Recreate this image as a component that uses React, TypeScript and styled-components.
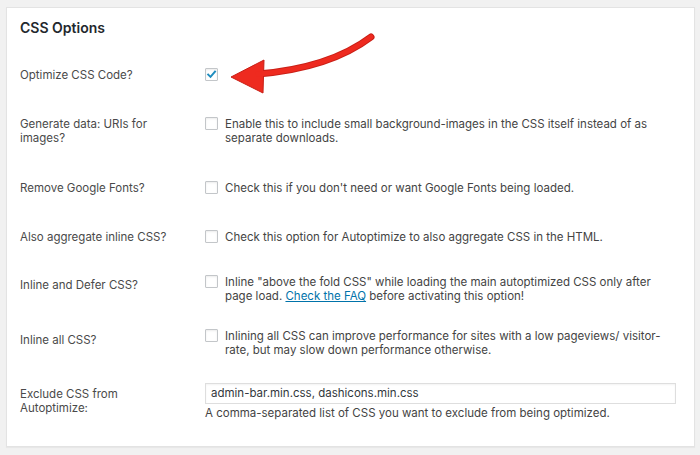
import React from "react";
import styled, { createGlobalStyle } from "styled-components";

const GlobalStyle = createGlobalStyle`
  html, body { margin: 0; padding: 0; background: #f1f1f1; }
  body {
    font-family: Inter, "Liberation Sans", Arial, sans-serif;
    -webkit-font-smoothing: antialiased;
  }
`;

const Page = styled.div`
  position: relative;
  width: 700px;
  height: 455px;
  box-sizing: border-box;
  padding: 7px 5px 8px 6px;
`;

const Card = styled.section`
  box-sizing: border-box;
  height: 100%;
  background: #fff;
  border: 1px solid #e3e3e3;
  box-shadow: 0 1px 1px rgba(0, 0, 0, 0.04);
  padding: 12px 14px 0 13px;
`;

const Title = styled.h2`
  margin: 0;
  font-size: 14px;
  line-height: 16px;
  font-weight: 600;
  color: #23282d;
`;

const Row = styled.div<{ $gap: number }>`
  display: grid;
  grid-template-columns: 185px 1fr;
  margin-top: ${(p) => p.$gap}px;
  font-size: 11.5px;
  line-height: 14.5px;
  color: #444;
`;

const Label = styled.div<{ $shift?: number }>`
  padding-top: ${(p) => p.$shift ?? 0}px;
  padding-right: 30px;
  color: #4a4a4a;
`;

const Field = styled.div`
  display: flex;
  align-items: flex-start;
  gap: 7px;
`;

const Box = styled.span`
  flex: none;
  box-sizing: border-box;
  width: 13px;
  height: 13px;
  border: 1px solid #c3c6c9;
  border-radius: 1px;
  background: #fff;
  box-shadow: inset 0 1px 2px rgba(0, 0, 0, 0.08);
  display: flex;
  align-items: center;
  justify-content: center;
`;

const Desc = styled.span`
  max-width: 455px;
`;

const Link = styled.a`
  color: #0073aa;
  text-decoration: underline;
`;

const Control = styled.div`
  display: flex;
  flex-direction: column;
`;

const TextInput = styled.div`
  box-sizing: border-box;
  width: 471px;
  height: 21px;
  border: 1px solid #dedede;
  box-shadow: inset 0 1px 2px rgba(0, 0, 0, 0.05);
  padding: 0 5px;
  display: flex;
  align-items: center;
  color: #32373c;
  font-size: 11.5px;
`;

const Help = styled.p`
  margin: 2px 0 0;
`;

const Overlay = styled.svg`
  position: absolute;
  left: 0;
  top: 0;
  pointer-events: none;
`;

const Checkbox = ({ checked }: { checked?: boolean }) => (
  <Box>
    {checked && (
      <svg width="11" height="11" viewBox="0 0 11 11">
        <path d="M2.2 5.6 L4.5 7.9 L9 2.6" fill="none" stroke="#1e8cbe" strokeWidth="2" strokeLinecap="square" />
      </svg>
    )}
  </Box>
);

export default function App() {
  return (
    <>
      <GlobalStyle />
      <Page>
        <Card>
          <Title>CSS Options</Title>
          <Row $gap={32}>
            <Label>Optimize CSS Code?</Label>
            <Field>
              <Checkbox checked />
            </Field>
          </Row>
          <Row $gap={34}>
            <Label>Generate data: URIs for images?</Label>
            <Field>
              <Checkbox />
              <Desc>Enable this to include small background-images in the CSS itself instead of as separate downloads.</Desc>
            </Field>
          </Row>
          <Row $gap={35}>
            <Label>Remove Google Fonts?</Label>
            <Field>
              <Checkbox />
              <Desc>Check this if you don't need or want Google Fonts being loaded.</Desc>
            </Field>
          </Row>
          <Row $gap={35}>
            <Label>Also aggregate inline CSS?</Label>
            <Field>
              <Checkbox />
              <Desc>Check this option for Autoptimize to also aggregate CSS in the HTML.</Desc>
            </Field>
          </Row>
          <Row $gap={30}>
            <Label $shift={3}>Inline and Defer CSS?</Label>
            <Field>
              <Checkbox />
              <Desc>
                Inline "above the fold CSS" while loading the main autoptimized CSS only after
                <br />
                page load. <Link href="#">Check the FAQ</Link> before activating this option!
              </Desc>
            </Field>
          </Row>
          <Row $gap={25}>
            <Label $shift={4}>Inline all CSS?</Label>
            <Field>
              <Checkbox />
              <Desc>Inlining all CSS can improve performance for sites with a low pageviews/ visitor-rate, but may slow down performance otherwise.</Desc>
            </Field>
          </Row>
          <Row $gap={25}>
            <Label $shift={4}>Exclude CSS from Autoptimize:</Label>
            <Control>
              <TextInput>admin-bar.min.css, dashicons.min.css</TextInput>
              <Help>A comma-separated list of CSS you want to exclude from being optimized.</Help>
            </Control>
          </Row>
        </Card>
        <Overlay width="700" height="455" viewBox="0 0 700 455">
          <path d="M371 37 Q330 68 258 74" fill="none" stroke="#c81f16" strokeWidth="7" strokeLinecap="round" />
          <path d="M231 77 L264 60 L263 93 Z" fill="#ee2a1f" stroke="#c81f16" strokeWidth="1" strokeLinejoin="round" />
          <path d="M371 37 Q330 68 258 74" fill="none" stroke="#ee2a1f" strokeWidth="5" strokeLinecap="round" />
        </Overlay>
      </Page>
    </>
  );
}
